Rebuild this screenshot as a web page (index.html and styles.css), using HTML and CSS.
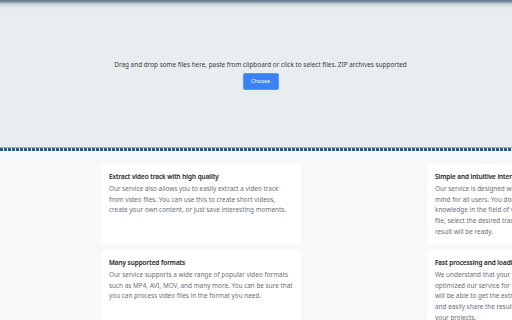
FILE: index.html
```html
<!DOCTYPE html>
<html lang="en">
<head>
    <meta charset="UTF-8">
    <meta name="viewport" content="width=device-width, initial-scale=1.0">
    <title>Extract video track</title>
    <link rel="stylesheet" href="styles.css">
</head>
<body>

    <!-- Drop zone -->
    <div class="dropzone">
        <p class="dropzone-text">Drag and drop some files here, paste from clipboard or click to select files. ZIP archives supported</p>
        <button class="choose-btn">Choose</button>
    </div>
    <div class="dropzone-edge"></div>

    <!-- Features -->
    <div class="features-wrap">
        <div class="features">
            <div class="card">
                <h3>Extract video track with high quality</h3>
                <p>Our service also allows you to easily extract a video track from video files. You can use this to create short videos, create your own content, or just save interesting moments.</p>
            </div>
            <div class="card">
                <h3>Simple and intuitive interface</h3>
                <p>Our service is designed with ease of use and accessibility in mind for all users. You don't need to have any special knowledge in the field of video processing, simply upload a file, select the desired track and click the button, and the result will be ready.</p>
            </div>
            <div class="card">
                <h3>Many supported formats</h3>
                <p>Our service supports a wide range of popular video formats such as MP4, AVI, MOV, and many more. You can be sure that you can process video files in the format you need.</p>
            </div>
            <div class="card">
                <h3>Fast processing and loading</h3>
                <p>We understand that your time is very valuable to you, so we optimized our service for fast and reliable processing. You will be able to get the extracted video track in a few seconds and easily share the result with your colleagues or use it in your projects.</p>
            </div>
        </div>
    </div>

</body>
</html>
```

FILE: styles.css
```css
/* Base */
body {
    margin: 0;
    font-family: 'Noto Sans', sans-serif;
    background: #f7f9fb;
    color: #222;
    overflow: hidden;
}

/* Drop zone */
.dropzone {
    height: 147px;
    background: linear-gradient(to bottom, #5d7486 0, #8397a6 2px, #c9d3da 4px, #e2e8ec 7px, #e8edf0 10px);
    display: flex;
    flex-direction: column;
    align-items: center;
    justify-content: center;
    padding: 2px 0 0 9px;
    box-sizing: border-box;
}

.dropzone-text {
    margin: 0 0 4px;
    font-size: 6.4px;
    color: #3a3a3a;
}

.choose-btn {
    background: #3b82f6;
    color: #fff;
    border: 1px solid #5b95f3;
    border-radius: 2px;
    width: 36px;
    height: 17px;
    padding: 0;
    font-family: 'Noto Sans', sans-serif;
    font-size: 5.4px;
    cursor: pointer;
}

.dropzone-edge {
    height: 4px;
    background:
        linear-gradient(to bottom, #8fb0c4 0, #8fb0c4 1px, transparent 1px),
        repeating-linear-gradient(to right, #2f5d7c 0, #2f5d7c 3px, #f2f5f7 3px, #f2f5f7 4px);
}

/* Feature cards */
.features-wrap {
    overflow: hidden;
    width: 512px;
}

.features {
    display: grid;
    grid-template-columns: 200px 200px;
    column-gap: 126px;
    row-gap: 6px;
    padding: 13px 0 0 101px;
    width: max-content;
}

.card {
    background: #fff;
    border-radius: 3px;
    box-shadow: 0 0 2px rgba(0, 0, 0, 0.06);
    padding: 8px 8px 8px 8px;
    height: 80px;
    box-sizing: border-box;
}

.card h3 {
    margin: 0 0 3px;
    font-size: 6.4px;
    font-weight: 500;
    color: #1e1e1e;
    -webkit-text-stroke: 0.15px #1e1e1e;
}

.card p {
    margin: 0;
    font-size: 6.4px;
    line-height: 10.7px;
    color: #6b6e78;
}
```
